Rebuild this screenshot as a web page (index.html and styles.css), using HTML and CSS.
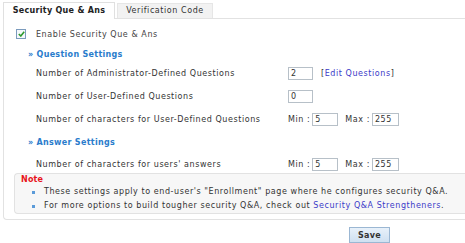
FILE: index.html
```html
<!DOCTYPE html>
<html>
<head>
<meta charset="utf-8">
<link rel="stylesheet" href="styles.css">
</head>
<body>
<div class="tabs">
  <div class="tab active">Security Que &amp; Ans</div>
  <div class="tab">Verification Code</div>
</div>
<div class="panel">
  <div class="enable">
    <span class="check"><svg width="7" height="6" viewBox="0 0 7 6"><path d="M0.8 3 L2.8 5 L6.2 0.8" fill="none" stroke="#2e9a2e" stroke-width="1.6"/></svg></span>
    <span>Enable Security Que &amp; Ans</span>
  </div>
  <div class="section">» Question Settings</div>
  <div class="rows">
    <div class="row">
      <span class="label">Number of Administrator-Defined Questions</span>
      <span class="ctrl"><span class="input w24">2</span><span class="edit">[<a>Edit Questions</a>]</span></span>
    </div>
    <div class="row">
      <span class="label">Number of User-Defined Questions</span>
      <span class="ctrl"><span class="input w24">0</span></span>
    </div>
    <div class="row">
      <span class="label">Number of characters for User-Defined Questions</span>
      <span class="ctrl"><span class="mm">Min :</span><span class="input w25">5</span><span class="mm max">Max :</span><span class="input w26">255</span></span>
    </div>
  </div>
  <div class="section s2">» Answer Settings</div>
  <div class="rows r2">
    <div class="row">
      <span class="label">Number of characters for users' answers</span>
      <span class="ctrl"><span class="mm">Min :</span><span class="input w25">5</span><span class="mm max">Max :</span><span class="input w26">255</span></span>
    </div>
  </div>
  <div class="note">
    <div class="note-title">Note</div>
    <ul>
      <li>These settings apply to end-user's "Enrollment" page where he configures security Q&amp;A.</li>
      <li>For more options to build tougher security Q&amp;A, check out <a>Security Q&amp;A Strengtheners</a>.</li>
    </ul>
  </div>
</div>
<div class="actions">
  <button class="save">Save</button>
</div>
</body>
</html>
```
FILE: styles.css
```css
* { box-sizing: border-box; }
html, body { margin: 0; padding: 0; background: #fff; }
body {
  width: 465px;
  height: 243px;
  overflow: hidden;
  font-family: "DejaVu Sans", Verdana, sans-serif;
  font-size: 8px;
  letter-spacing: 0.57px;
  color: #333;
}
.tabs {
  display: flex;
  padding: 2px 0 0 3px;
  height: 18px;
  align-items: flex-end;
}
.tab {
  height: 15px;
  line-height: 14px;
  width: 96px;
  text-align: center;
  background: #f2f2f2;
  border: 1px solid #e6e6e6;
  border-bottom: none;
  margin-right: 2px;
  color: #333;
}
.tab.active {
  width: 112px;
  height: 17px;
  line-height: 16px;
  background: #fff;
  font-weight: bold;
  letter-spacing: 0.3px;
  color: #222;
  border-color: #e0e0e0;
  margin-bottom: -1px;
  position: relative;
  z-index: 1;
}
.panel {
  margin-left: 3px;
  width: 462px;
  border: 1px solid #e2e2e2;
  border-right: none;
  border-radius: 0 0 0 4px;
  padding: 10px 0 5px 12px;
}
.enable {
  display: flex;
  align-items: center;
  gap: 10px;
  height: 10px;
  color: #444;
}
.check {
  width: 10px;
  height: 10px;
  border: 1px solid #7b9bbd;
  background: #f4f8fb;
  display: flex;
  align-items: center;
  justify-content: center;
}
.section {
  margin: 11px 0 0 12px;
  color: #2a7ccc;
  font-weight: bold;
  letter-spacing: 0.3px;
  height: 10px;
  line-height: 10px;
}
.section.s2 { margin-top: 7px; }
.rows { margin-top: 2px; }
.row {
  display: flex;
  align-items: center;
  height: 23px;
  padding-left: 20px;
}
.r2 { margin-top: 5px; }
.label { width: 252px; color: #333; }
.ctrl { display: flex; align-items: center; }
.input {
  height: 13px;
  border: 1px solid #b7c0c8;
  background: #fff;
  line-height: 11px;
  padding-left: 2px;
  color: #333;
}
.w24 { width: 25px; }
.w25 { width: 26px; }
.w26 { width: 27px; }
.edit { margin-left: 8px; color: #333; }
a { color: #3b3bc8; text-decoration: none; }
.mm { margin-right: 2px; }
.max { margin-left: 7px; }
.note {
  margin: -3px 0 0 -2px;
  height: 41px;
  background: #f7f7f7;
  border: 1px solid #e2e2e2;
  border-right: none;
  border-radius: 4px 0 0 4px;
  padding: 1px 0 0 6px;
}
.note-title { color: #e8141a; font-weight: bold; letter-spacing: 0.2px; height: 10px; line-height: 10px; }
.note ul { margin: 0; padding: 0; list-style: none; }
.note li {
  position: relative;
  padding-left: 23px;
  height: 14px;
  line-height: 14px;
  color: #333;
}
.note li::before {
  content: "";
  position: absolute;
  left: 11px;
  top: 6px;
  width: 3px;
  height: 3px;
  background: #5b9bd9;
}
.actions { padding: 7px 0 0 349px; }
.save {
  width: 41px;
  height: 16px;
  padding: 0;
  border: 1px solid #9bb7d3;
  background: linear-gradient(#e8f1fa, #cfe0f1);
  font-family: "DejaVu Sans", Verdana, sans-serif;
  font-size: 8px;
  font-weight: bold;
  letter-spacing: 0.3px;
  color: #333;
}
```
